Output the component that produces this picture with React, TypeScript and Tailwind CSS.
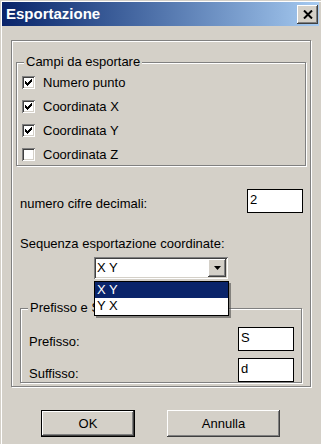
import React from 'react';

const raised =
  'shadow-[inset_-1px_-1px_0_#404040,inset_1px_1px_0_#ffffff,inset_-2px_-2px_0_#808080,inset_2px_2px_0_#d4d0c8]';

const Check = ({ checked }: { checked: boolean }) => (
  <div className="w-[13px] h-[13px] bg-white shrink-0 shadow-[inset_1px_1px_0_#808080,inset_-1px_-1px_0_#ffffff,inset_2px_2px_0_#404040,inset_-2px_-2px_0_#d4d0c8] flex items-center justify-center">
    {checked && (
      <svg width="7" height="7" viewBox="0 0 7 7" className="block">
        <path d="M0 2h1v1h1v1h1v-1h1v-1h1v-1h1v-1h1v3h-1v1h-1v1h-1v1h-1v1h-1v-1h-1v-1h-1z" fill="#000" />
      </svg>
    )}
  </div>
);

const Field = ({ value }: { value: string }) => (
  <div className="w-[56px] h-[24px] border border-black bg-white px-[2px] leading-[20px]">{value}</div>
);

const Group = ({ title, className, children }: { title: string; className: string; children: React.ReactNode }) => (
  <div className={`relative border border-[#808080] shadow-[1px_1px_0_#ffffff,inset_1px_1px_0_#ffffff] ${className}`}>
    <span className="absolute -top-[9px] left-[7px] px-[2px] bg-[#d4d0c8] leading-[15px]">{title}</span>
    {children}
  </div>
);

export default function App() {
  const fields = [
    { label: 'Numero punto', checked: true },
    { label: 'Coordinata X', checked: true },
    { label: 'Coordinata Y', checked: true },
    { label: 'Coordinata Z', checked: false },
  ];

  return (
    <div className="relative w-[321px] h-[444px] overflow-hidden bg-[#d4d0c8] text-[13px] text-black font-['Liberation_Sans',Arial,sans-serif] shadow-[inset_1px_1px_0_#d4d0c8,inset_2px_2px_0_#ffffff]">
      {/* title bar */}
      <div className="mx-[2px] mt-[2px] h-[24px] flex items-center justify-between bg-gradient-to-r from-[#0a246a] to-[#a6caf0]">
        <span className="pl-[4px] text-white font-bold text-[15px]">Esportazione</span>
        <div className={`mr-[1px] w-[21px] h-[19px] bg-[#d4d0c8] flex items-center justify-center ${raised}`}>
          <svg width="10" height="9" viewBox="0 0 10 9">
            <path d="M1 0.5L9 8.5M9 0.5L1 8.5" stroke="#000" strokeWidth="2" />
          </svg>
        </div>
      </div>

      <div className="pl-[11px] pt-[14px]">
        <div className="w-[300px] h-[347px] border border-[#808080] shadow-[1px_1px_0_#ffffff,inset_1px_1px_0_#ffffff] flex flex-col">
          <Group title="Campi da esportare" className="mt-[21px] ml-[4px] w-[290px] h-[104px] pt-[13px] pl-[5px]">
            <div className="flex flex-col gap-[11px]">
              {fields.map((f) => (
                <div key={f.label} className="flex items-center gap-[8px] h-[13px]">
                  <Check checked={f.checked} />
                  <span>{f.label}</span>
                </div>
              ))}
            </div>
          </Group>

          <div className="mt-[22px] pl-[8px] pr-[7px] flex items-center justify-between">
            <span className="pt-[6px]">numero cifre decimali:</span>
            <Field value="2" />
          </div>

          <div className="mt-[22px] pl-[8px] leading-[15px]">Sequenza esportazione coordinate:</div>

          <div className="relative mt-[6px] ml-[82px] w-[134px] h-[22px] bg-white shadow-[inset_1px_1px_0_#808080,inset_-1px_-1px_0_#ffffff,inset_2px_2px_0_#404040,inset_-2px_-2px_0_#d4d0c8] flex items-center">
            <span className="pl-[3px] flex-1">X Y</span>
            <div className={`mr-[2px] w-[18px] h-[18px] bg-[#d4d0c8] flex items-center justify-center ${raised}`}>
              <svg width="7" height="4" viewBox="0 0 7 4">
                <path d="M0 0h7L3.5 4z" fill="#000" />
              </svg>
            </div>
            <div className="absolute z-10 left-0 top-[24px] w-[135px] border border-black bg-white shadow-[2px_2px_0_rgba(64,64,64,0.55)] leading-[16px]">
              <div className="bg-[#0a246a] text-white pl-[2px]">X Y</div>
              <div className="pl-[2px] pb-[1px]">Y X</div>
            </div>
          </div>

          <Group title="Prefisso e Suffisso" className="mt-[29px] ml-[8px] w-[282px] h-[75px] pt-[18px] pl-[8px] pr-[7px]">
            <div className="flex flex-col gap-[6px]">
              <div className="flex items-center justify-between">
                <span className="pt-[5px]">Prefisso:</span>
                <Field value="S" />
              </div>
              <div className="flex items-center justify-between">
                <span className="pt-[7px]">Suffisso:</span>
                <Field value="d" />
              </div>
            </div>
          </Group>
        </div>

        <div className="mt-[23px] ml-[30px] flex gap-[32px]">
          <div className="w-[94px] h-[27px] border border-black bg-[#d4d0c8]">
            <div className={`w-full h-full flex items-center justify-center ${raised}`}>OK</div>
          </div>
          <div className={`w-[113px] h-[27px] bg-[#d4d0c8] flex items-center justify-center ${raised}`}>Annulla</div>
        </div>
      </div>
    </div>
  );
}
